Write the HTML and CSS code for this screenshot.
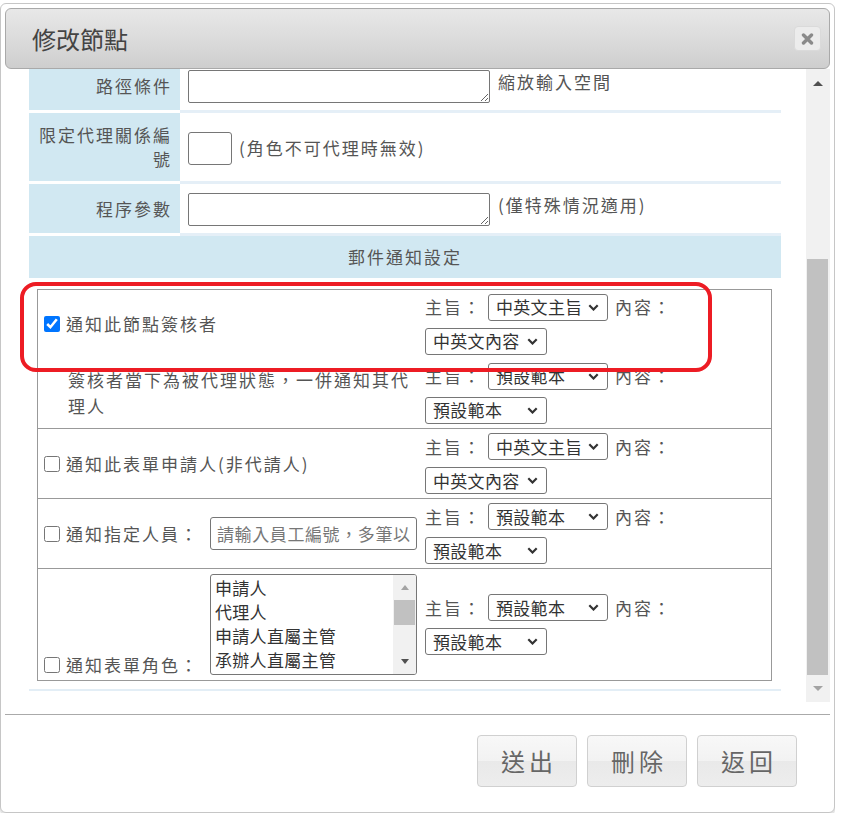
FILE: index.html
```html
<!DOCTYPE html>
<html lang="zh-Hant">
<head>
<meta charset="utf-8">
<title>修改節點</title>
<link rel="stylesheet" href="styles.css">
</head>
<body>
<div class="dialog">
  <div class="titlebar">
    <span class="title">修改節點</span>
    <button class="close" type="button" aria-label="關閉"><svg width="13" height="12" viewBox="0 0 13 12"><path d="M2.5 2L10.5 10M10.5 2L2.5 10" stroke="#8a8a8a" stroke-width="3.4" stroke-linecap="round"/></svg></button>
  </div>
  <div class="body">
    <div class="scroll">
      <div class="form">
        <div class="row">
          <div class="label">路徑條件</div>
          <div class="value top"><textarea class="ta"></textarea><span class="note">縮放輸入空間</span></div>
        </div>
        <div class="row">
          <div class="label">限定代理關係編號</div>
          <div class="value mid"><input class="num" type="text"><span class="note">(角色不可代理時無效)</span></div>
        </div>
        <div class="row">
          <div class="label">程序參數</div>
          <div class="value top"><textarea class="ta"></textarea><span class="note">(僅特殊情況適用)</span></div>
        </div>
        <div class="section-head">郵件通知設定</div>
        <div class="section-body">
          <div class="notify">
            <div class="nrow r1">
              <div class="nleft"><input type="checkbox" class="cb" checked><span class="txt">通知此節點簽核者</span></div>
              <div class="nright">
                <span class="lbl">主旨：</span>
                <div class="sel w120"><span>中英文主旨</span><svg width="11" height="7" viewBox="0 0 11 7"><path d="M1.3 1.3L5.5 5.5L9.7 1.3" fill="none" stroke="#333" stroke-width="2.2"/></svg></div>
                <span class="lbl lbl2">內容：</span>
                <div class="sel w122"><span>中英文內容</span><svg width="11" height="7" viewBox="0 0 11 7"><path d="M1.3 1.3L5.5 5.5L9.7 1.3" fill="none" stroke="#333" stroke-width="2.2"/></svg></div>
              </div>
            </div>
            <div class="nrow r2">
              <div class="nleft indent"><span class="wrap">簽核者當下為被代理狀態，一併通知其代理人</span></div>
              <div class="nright">
                <span class="lbl">主旨：</span>
                <div class="sel w120"><span>預設範本</span><svg width="11" height="7" viewBox="0 0 11 7"><path d="M1.3 1.3L5.5 5.5L9.7 1.3" fill="none" stroke="#333" stroke-width="2.2"/></svg></div>
                <span class="lbl lbl2">內容：</span>
                <div class="sel w122"><span>預設範本</span><svg width="11" height="7" viewBox="0 0 11 7"><path d="M1.3 1.3L5.5 5.5L9.7 1.3" fill="none" stroke="#333" stroke-width="2.2"/></svg></div>
              </div>
            </div>
            <div class="nrow r3 sep">
              <div class="nleft"><input type="checkbox" class="cb"><span class="txt">通知此表單申請人(非代請人)</span></div>
              <div class="nright">
                <span class="lbl">主旨：</span>
                <div class="sel w120"><span>中英文主旨</span><svg width="11" height="7" viewBox="0 0 11 7"><path d="M1.3 1.3L5.5 5.5L9.7 1.3" fill="none" stroke="#333" stroke-width="2.2"/></svg></div>
                <span class="lbl lbl2">內容：</span>
                <div class="sel w122"><span>中英文內容</span><svg width="11" height="7" viewBox="0 0 11 7"><path d="M1.3 1.3L5.5 5.5L9.7 1.3" fill="none" stroke="#333" stroke-width="2.2"/></svg></div>
              </div>
            </div>
            <div class="nrow r4 sep">
              <div class="nleft tight"><input type="checkbox" class="cb"><span class="txt">通知指定人員：</span><input class="emp" type="text" placeholder="請輸入員工編號，多筆以,分隔"></div>
              <div class="nright">
                <span class="lbl">主旨：</span>
                <div class="sel w120"><span>預設範本</span><svg width="11" height="7" viewBox="0 0 11 7"><path d="M1.3 1.3L5.5 5.5L9.7 1.3" fill="none" stroke="#333" stroke-width="2.2"/></svg></div>
                <span class="lbl lbl2">內容：</span>
                <div class="sel w122"><span>預設範本</span><svg width="11" height="7" viewBox="0 0 11 7"><path d="M1.3 1.3L5.5 5.5L9.7 1.3" fill="none" stroke="#333" stroke-width="2.2"/></svg></div>
              </div>
            </div>
            <div class="nrow r5 sep">
              <div class="nleft tight bottom"><input type="checkbox" class="cb cb-low"><span class="txt lowtxt">通知表單角色：</span>
                <div class="listbox">
                  <div class="opts">
                    <div>申請人</div>
                    <div>代理人</div>
                    <div>申請人直屬主管</div>
                    <div>承辦人直屬主管</div>
                  </div>
                  <div class="lsb">
                    <div class="lbtn"><span class="tri-up light"></span></div>
                    <div class="lthumb"></div>
                    <div class="lfill"></div>
                    <div class="lbtn"><span class="tri-down dark"></span></div>
                  </div>
                </div>
              </div>
              <div class="nright">
                <span class="lbl">主旨：</span>
                <div class="sel w120"><span>預設範本</span><svg width="11" height="7" viewBox="0 0 11 7"><path d="M1.3 1.3L5.5 5.5L9.7 1.3" fill="none" stroke="#333" stroke-width="2.2"/></svg></div>
                <span class="lbl lbl2">內容：</span>
                <div class="sel w122"><span>預設範本</span><svg width="11" height="7" viewBox="0 0 11 7"><path d="M1.3 1.3L5.5 5.5L9.7 1.3" fill="none" stroke="#333" stroke-width="2.2"/></svg></div>
              </div>
            </div>
            <div class="mark"></div>
          </div>
        </div>
      </div>
    </div>
    <div class="vsb">
      <div class="vbtn up"><span class="tri-up dark big"></span></div>
      <div class="vgap"></div>
      <div class="vthumb"></div>
      <div class="vbtn down"><span class="tri-down light big"></span></div>
    </div>
  </div>
  <div class="footer">
    <button class="btn" type="button">送出</button>
    <button class="btn" type="button">刪除</button>
    <button class="btn" type="button">返回</button>
  </div>
</div>
</body>
</html>
```

FILE: styles.css
```css
* { box-sizing: border-box; }
html, body { margin: 0; padding: 0; background: #fff; }
body {
  font-family: "Noto Sans CJK TC", "Noto Sans", sans-serif;
  font-size: 17px;
  letter-spacing: 2px;
  color: #555;
  line-height: 24px;
}
.dialog {
  margin-top: 3px;
  width: 835px;
  border: 1px solid #c6c6c6;
  border-radius: 6px;
  padding: 4px 4px 0 4px;
  background: #fff;
  box-shadow: 0 3px 0 #e4e4e4;
}
.titlebar {
  height: 61px;
  border: 1px solid #a9a9a9;
  border-radius: 6px;
  background: linear-gradient(#e8e8e8, #d9d9d9 60%, #cecece);
  display: flex;
  align-items: center;
  justify-content: space-between;
  padding: 0 8px 0 26px;
}
.title { font-size: 24px; letter-spacing: 0; color: #444; line-height: 30px; }
.close {
  width: 27px; height: 25px;
  border: 1px solid #dadada;
  border-radius: 4px;
  background: #ececec;
  padding: 0;
  display: flex; align-items: center; justify-content: center;
}
.body { display: flex; height: 633px; }
.scroll { flex: 1; overflow: hidden; }
.form { margin: -8px 25px 0 24px; }
.row { display: flex; }
.label {
  width: 151px;
  flex: none;
  background: #d1e8f2;
  border-bottom: 3px solid #fff;
  padding: 10px 8px;
  display: flex;
  align-items: center;
  justify-content: flex-end;
  text-align: right;
}
.value {
  flex: 1;
  border-bottom: 3px solid #e5eff7;
  padding: 9px 8px 7px 8px;
  display: flex;
  gap: 8px;
}
.value.top { align-items: flex-start; }
.value.mid { align-items: center; gap: 7px; }
.value.top .note { margin-top: 0; }
.ta {
  display: block;
  width: 302px; height: 33px;
  border: 1px solid #767676;
  border-radius: 2px;
  margin: 0;
  font-family: inherit;
  font-size: 17px;
}
.num {
  width: 44px; height: 33px;
  border: 1px solid #767676;
  border-radius: 3px;
  margin: 0;
}
.section-head {
  background: #d1e8f2;
  height: 42px;
  line-height: 42px;
  text-align: center;
}
.section-body {
  padding: 11px 9px 8px 8px;
  border-bottom: 2px solid #e3eef6;
}
.notify {
  position: relative;
  border: 1px solid #999;
}
.nrow { display: flex; }
.nrow.sep { border-top: 1px solid #999; }
.r1 { height: 68px; }
.r2 { height: 70px; }
.r3, .r4 { height: 70px; }
.r5 { height: 112px; }
.nleft {
  width: 380px;
  flex: none;
  padding: 0 6px 0 6px;
  display: flex;
  align-items: center;
}
.nleft.tight { padding-right: 0; }
.nleft.indent { padding-left: 30px; }
.nleft.bottom { align-items: flex-end; padding-bottom: 5px; }
.txt { white-space: nowrap; flex: none; }
.wrap { line-height: 26px; }
.cb {
  width: 16px; height: 16px;
  margin: 0 6px 0 0;
  flex: none;
}
.cb-low { margin-bottom: 2px; }
.lowtxt { line-height: 20px; }
.nright {
  flex: 1;
  padding: 0 6px 0 7px;
  display: flex;
  flex-wrap: wrap;
  align-content: center;
  align-items: center;
  column-gap: 6px;
  row-gap: 7px;
}
.lbl2 { margin-left: 1px; }
.sel {
  height: 27px;
  border: 1px solid #767676;
  border-radius: 3px;
  padding: 0 8px 0 7px;
  display: flex;
  align-items: center;
  justify-content: space-between;
  font-size: 17px;
  letter-spacing: 0.3px;
  color: #333;
  background: #fff;
  white-space: nowrap;
}
.sel svg { flex: none; }
.w120 { width: 120px; }
.w122 { width: 122px; }
.emp {
  width: 207px; height: 33px;
  margin: 0 0 0 11px;
  border: 1px solid #767676;
  border-radius: 3px;
  padding: 0 6px;
  font-family: inherit;
  font-size: 17px;
  letter-spacing: 0.6px;
  flex: none;
}
.emp::placeholder { color: #777; }
.listbox {
  width: 207px; height: 101px;
  margin-left: 11px;
  border: 1px solid #767676;
  border-radius: 3px;
  display: flex;
  overflow: hidden;
  flex: none;
}
.opts {
  flex: 1;
  padding: 1px 4px;
  font-size: 17px;
  letter-spacing: 0.3px;
  color: #333;
  line-height: 24px;
  overflow: hidden;
  white-space: nowrap;
}
.lsb {
  width: 23px;
  flex: none;
  background: #f1f1f1;
  display: flex;
  flex-direction: column;
}
.lbtn { height: 25px; display: flex; align-items: center; justify-content: center; }
.lthumb { height: 25px; margin: 0 1px; background: #c1c1c1; }
.lfill { flex: 1; }
.tri-up, .tri-down { width: 0; height: 0; border-left: 4.5px solid transparent; border-right: 4.5px solid transparent; }
.tri-up { border-bottom: 5px solid #505050; }
.tri-down { border-top: 5px solid #505050; }
.tri-up.light { border-bottom-color: #a3a3a3; }
.tri-down.light { border-top-color: #a3a3a3; }
.big { border-left-width: 5.5px; border-right-width: 5.5px; }
.mark {
  position: absolute;
  left: -18px; top: -8px;
  width: 692px; height: 90px;
  border: 4px solid #ed1c24;
  border-radius: 16px;
  pointer-events: none;
}
.vsb {
  width: 24px;
  flex: none;
  background: #f1f1f1;
  display: flex;
  flex-direction: column;
}
.vbtn { display: flex; align-items: center; justify-content: center; }
.vbtn.up { height: 28px; }
.vgap { height: 162px; }
.vthumb { height: 416px; margin: 0 2px 0 1px; background: #c1c1c1; }
.vbtn.down { height: 27px; }
.footer {
  margin-top: 12px;
  border-top: 1px solid #aaa;
  padding: 20px 33px 25px 0;
  display: flex;
  justify-content: flex-end;
  gap: 10px;
}
.btn {
  width: 100px; height: 52px;
  border: 1px solid #d0d0d0;
  border-radius: 4px;
  background: linear-gradient(#f8f8f8 0%, #f2f2f2 50%, #e9e9e9 50%, #ededed 100%);
  font-family: "Noto Sans CJK TC", "Noto Sans", sans-serif;
  font-size: 24px;
  letter-spacing: 4px;
  padding: 0 0 0 4px;
  color: #666;
  line-height: 30px;
}
```
